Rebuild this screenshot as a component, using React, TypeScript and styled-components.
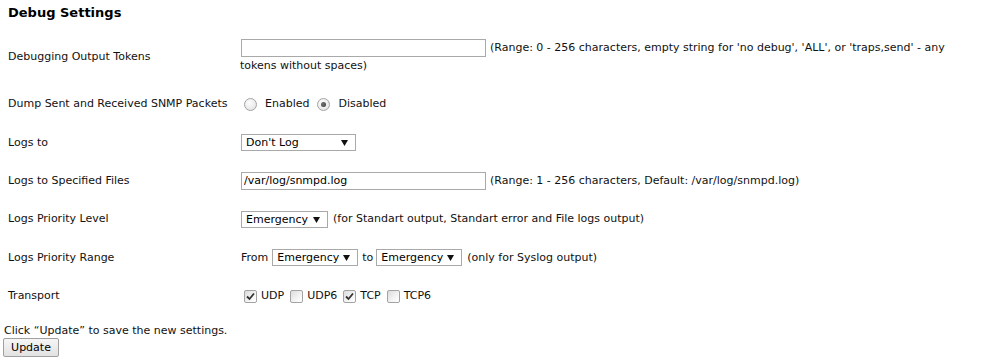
import React from "react";
import styled, { createGlobalStyle } from "styled-components";

const Global = createGlobalStyle`
  html, body { margin: 0; padding: 0; background: #fff; }
  body { font-family: Verdana, "DejaVu Sans", sans-serif; }
`;

const Page = styled.div`
  width: 981px;
  font-family: Verdana, "DejaVu Sans", sans-serif;
  font-size: 11px;
  color: #111;
`;

const Heading = styled.h3`
  margin: 0;
  padding: 5px 8px 0;
  font-size: 13px;
  font-weight: bold;
  line-height: 16px;
  height: 23px;
  color: #000;
`;

const Form = styled.div`
  display: flex;
  flex-direction: column;
  padding-left: 8px;
  width: 965px;
`;

const Row = styled.div<{ $h: number }>`
  display: grid;
  grid-template-columns: 232px 1fr;
  align-items: center;
  min-height: ${(p) => p.$h}px;
`;

const Label = styled.div`
  line-height: 16px;
`;

const Control = styled.div`
  line-height: 16px;
  display: flex;
  align-items: center;
  flex-wrap: wrap;
`;

const WrapControl = styled.div`
  line-height: 17px;
`;

const TextInput = styled.input`
  box-sizing: border-box;
  width: 245px;
  height: 18px;
  border: 1px solid #a9a9a9;
  padding: 0 2px;
  margin: 0 1px;
  font: 11px Verdana, "DejaVu Sans", sans-serif;
  color: #000;
  vertical-align: middle;
  outline: none;
`;

const Hint = styled.span<{ $ml?: number }>`
  margin-left: ${(p) => p.$ml ?? 4}px;
`;

const SelectBox = styled.div<{ $w: number }>`
  box-sizing: border-box;
  display: inline-flex;
  align-items: center;
  justify-content: space-between;
  width: ${(p) => p.$w}px;
  height: 17px;
  border: 1px solid #a9a9a9;
  padding: 0 7px 0 4px;
  margin: 0 1px;
  background: #fff;
  color: #000;
  line-height: 15px;
`;

const Arrow = () => (
  <svg width="7" height="7" viewBox="0 0 7 7">
    <path d="M0 1 L7 1 L3.5 7 Z" fill="#111" />
  </svg>
);

const Select = ({ w, value }: { w: number; value: string }) => (
  <SelectBox $w={w}>
    <span>{value}</span>
    <Arrow />
  </SelectBox>
);

const Choice = styled.label<{ $ml: number }>`
  display: inline-flex;
  align-items: center;
  margin-left: ${(p) => p.$ml}px;
`;

const RadioDot = styled.span<{ $on?: boolean }>`
  box-sizing: border-box;
  width: 13px;
  height: 13px;
  border-radius: 50%;
  border: 1px solid #a3a3a3;
  background: radial-gradient(circle at 40% 35%, #fdfdfd 0%, #e8e8e8 70%, #d6d6d6 100%);
  display: inline-flex;
  align-items: center;
  justify-content: center;
  margin-right: 8px;
  &::after {
    content: "";
    display: ${(p) => (p.$on ? "block" : "none")};
    width: 5px;
    height: 5px;
    border-radius: 50%;
    background: radial-gradient(circle at 40% 40%, #777 0%, #333 100%);
  }
`;

const Radio = ({ on, label, ml }: { on?: boolean; label: string; ml: number }) => (
  <Choice $ml={ml}>
    <RadioDot $on={on} />
    <span>{label}</span>
  </Choice>
);

const BoxMark = styled.span`
  box-sizing: border-box;
  width: 13px;
  height: 13px;
  border: 1px solid #a3a3a3;
  border-radius: 2px;
  background: linear-gradient(135deg, #dcdcdc 0%, #f4f4f4 60%, #ffffff 100%);
  display: inline-flex;
  align-items: center;
  justify-content: center;
  margin-right: 4px;
`;

const Check = ({ on, label, ml }: { on?: boolean; label: string; ml: number }) => (
  <Choice $ml={ml}>
    <BoxMark>
      {on && (
        <svg width="9" height="9" viewBox="0 0 9 9">
          <path d="M1 4.5 L3.5 7 L8 1.5" stroke="#333" strokeWidth="1.8" fill="none" />
        </svg>
      )}
    </BoxMark>
    <span>{label}</span>
  </Choice>
);

const Footer = styled.div`
  padding: 8px 0 0 3px;
`;

const Note = styled.div`
  line-height: 15px;
  padding-left: 1px;
`;

const Button = styled.button`
  box-sizing: border-box;
  margin-top: 0;
  height: 19px;
  width: 56px;
  padding: 0;
  border: 1px solid #a0a0a0;
  border-radius: 2px;
  background: linear-gradient(#f6f6f6, #e2e2e2);
  font: 11px Verdana, "DejaVu Sans", sans-serif;
  color: #000;
`;

export default function App() {
  return (
    <Page>
      <Global />
      <Heading>Debug Settings</Heading>
      <Form>
        <Row $h={57}>
          <Label>Debugging Output Tokens</Label>
          <WrapControl>
            <TextInput defaultValue="" />
            <Hint $ml={3}>
              (Range: 0 - 256 characters, empty string for 'no debug', 'ALL', or 'traps,send' - any tokens without spaces)
            </Hint>
          </WrapControl>
        </Row>
        <Row $h={38.4}>
          <Label>Dump Sent and Received SNMP Packets</Label>
          <Control>
            <Radio label="Enabled" ml={4} />
            <Radio label="Disabled" ml={8} on />
          </Control>
        </Row>
        <Row $h={38.4}>
          <Label>Logs to</Label>
          <Control>
            <Select w={115} value="Don't Log" />
          </Control>
        </Row>
        <Row $h={38.4}>
          <Label>Logs to Specified Files</Label>
          <Control>
            <TextInput defaultValue="/var/log/snmpd.log" />
            <Hint $ml={3}>(Range: 1 - 256 characters, Default: /var/log/snmpd.log)</Hint>
          </Control>
        </Row>
        <Row $h={38.4}>
          <Label>Logs Priority Level</Label>
          <Control>
            <Select w={87} value="Emergency" />
            <Hint $ml={4}>(for Standart output, Standart error and File logs output)</Hint>
          </Control>
        </Row>
        <Row $h={38.4}>
          <Label>Logs Priority Range</Label>
          <Control>
            <Hint $ml={1}>From</Hint>
            <Hint $ml={3}>
              <Select w={86} value="Emergency" />
            </Hint>
            <Hint $ml={3}>to</Hint>
            <Hint $ml={2}>
              <Select w={86} value="Emergency" />
            </Hint>
            <Hint $ml={4}>(only for Syslog output)</Hint>
          </Control>
        </Row>
        <Row $h={38.4}>
          <Label>Transport</Label>
          <Control>
            <Check label="UDP" ml={4} on />
            <Check label="UDP6" ml={6} />
            <Check label="TCP" ml={6} on />
            <Check label="TCP6" ml={6} />
          </Control>
        </Row>
      </Form>
      <Footer>
        <Note>Click “Update” to save the new settings.</Note>
        <Button>Update</Button>
      </Footer>
    </Page>
  );
}
